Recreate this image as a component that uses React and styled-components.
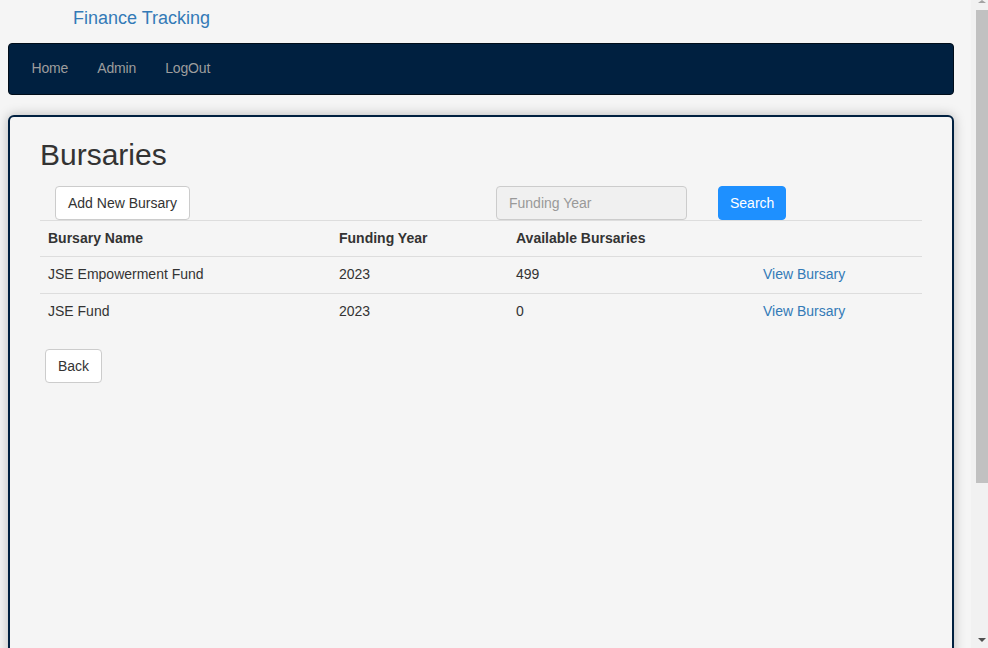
import React from 'react';
import styled, { createGlobalStyle } from 'styled-components';

const GlobalStyle = createGlobalStyle`
  html, body {
    margin: 0;
    background: #f5f5f5;
  }
  body {
    padding: 0 34px 8px 8px;
    font-family: "Liberation Sans", Arial, sans-serif;
    font-size: 14px;
    line-height: 1.42857;
    color: #333;
  }
  * { box-sizing: border-box; }
`;

const bursaries = [
  { name: 'JSE Empowerment Fund', year: 2023, available: 499 },
  { name: 'JSE Fund', year: 2023, available: 0 }
];

export default function App() {
  return (
    <>
      <GlobalStyle />
      <Brand href="#">Finance Tracking</Brand>
      <NavBar>
        <NavList>
          <li><NavLink href="#">Home</NavLink></li>
          <li><NavLink href="#">Admin</NavLink></li>
          <li><NavLink href="#">LogOut</NavLink></li>
        </NavList>
      </NavBar>
      <Card>
        <Title>Bursaries</Title>
        <Toolbar>
          <ToolCell>
            <Button>Add New Bursary</Button>
          </ToolCell>
          <ToolCell>
            <SearchInput placeholder="Funding Year" />
            <Button $primary>Search</Button>
          </ToolCell>
        </Toolbar>
        <Table>
          <thead>
            <tr>
              <Th $width={291}>Bursary Name</Th>
              <Th $width={177}>Funding Year</Th>
              <Th $width={247}>Available Bursaries</Th>
              <Th />
            </tr>
          </thead>
          <tbody>
            {bursaries.map(b => (
              <tr key={b.name}>
                <Td>{b.name}</Td>
                <Td>{b.year}</Td>
                <Td>{b.available}</Td>
                <Td><TableLink href="#">View Bursary</TableLink></Td>
              </tr>
            ))}
          </tbody>
        </Table>
        <BackRow>
          <Button>Back</Button>
        </BackRow>
      </Card>
      <ScrollTrack>
        <Arrow $up />
        <Thumb />
        <Arrow />
      </ScrollTrack>
    </>
  );
}

const Brand = styled.a`
  display: flex;
  align-items: center;
  height: 43px;
  padding-left: 65px;
  padding-bottom: 6px;
  font-size: 18px;
  color: #337ab7;
  text-decoration: none;
`;

const NavBar = styled.nav`
  height: 52px;
  background: #002040;
  border: 1px solid #000d1a;
  border-radius: 4px;
  padding: 0 8px;
  display: flex;
  align-items: center;
`;

const NavList = styled.ul`
  list-style: none;
  margin: 0;
  padding: 0;
  display: flex;
`;

const NavLink = styled.a`
  display: block;
  padding: 15px 14.5px;
  color: #9d9d9d;
  text-decoration: none;
  letter-spacing: -0.15px;
`;

const Card = styled.main`
  margin-top: 20px;
  min-height: 715px;
  background: #f5f5f5;
  border: 2px solid #002040;
  border-radius: 6px;
  box-shadow: 0 0 12px rgba(0, 0, 0, 0.25);
  padding: 0 30px;
`;

const Title = styled.h2`
  margin: 21px 0 15px;
  font-size: 30px;
  font-weight: 500;
  line-height: 1.1;
`;

const Toolbar = styled.div`
  display: grid;
  grid-template-columns: 1fr 1fr;
`;

const ToolCell = styled.div`
  display: flex;
  gap: 31px;
  padding: 0 15px;
`;

const Button = styled.button`
  height: 34px;
  padding: 7px ${p => (p.$primary ? '11px' : '12px')} 5px;
  font-family: inherit;
  font-size: 14px;
  line-height: 1.42857;
  border-radius: 4px;
  border: 1px solid ${p => (p.$primary ? '#1e90ff' : '#ccc')};
  background: ${p => (p.$primary ? '#1e90ff' : '#fff')};
  color: ${p => (p.$primary ? '#fff' : '#333')};
  cursor: pointer;
`;

const SearchInput = styled.input`
  width: 191px;
  height: 34px;
  padding: 6px 12px;
  font-family: inherit;
  font-size: 14px;
  color: #555;
  background: #f0f0f0;
  border: 1px solid #ccc;
  border-radius: 4px;
  &::placeholder { color: #999; }
`;

const Table = styled.table`
  width: 100%;
  border-collapse: collapse;
`;

const Th = styled.th`
  width: ${p => (p.$width ? `${p.$width}px` : 'auto')};
  padding: 8px 8px 7px;
  text-align: left;
  font-weight: bold;
  border-top: 1px solid #ddd;
`;

const Td = styled.td`
  padding: 8px;
  border-top: 1px solid #ddd;
`;

const TableLink = styled.a`
  color: #337ab7;
  text-decoration: none;
`;

const BackRow = styled.div`
  padding: 19px 5px 0;
`;

/* window scrollbar drawn over the right edge */
const ScrollTrack = styled.div`
  position: fixed;
  top: 0;
  right: 0;
  width: 17px;
  height: 100vh;
  background: #f1f1f1;
  display: flex;
  flex-direction: column;
  align-items: flex-end;
`;

const Thumb = styled.div`
  width: 12px;
  height: 473px;
  background: #c1c1c1;
  margin-top: 7px;
  margin-bottom: auto;
`;

const Arrow = styled.div`
  width: 0;
  height: 0;
  margin: ${p => (p.$up ? '0 2px 0 0' : '0 2px 6px 0')};
  border-left: 4px solid transparent;
  border-right: 4px solid transparent;
  ${p => (p.$up
    ? 'border-bottom: 3px solid #a3a3a3;'
    : 'border-top: 4px solid #505050;')}
`;
